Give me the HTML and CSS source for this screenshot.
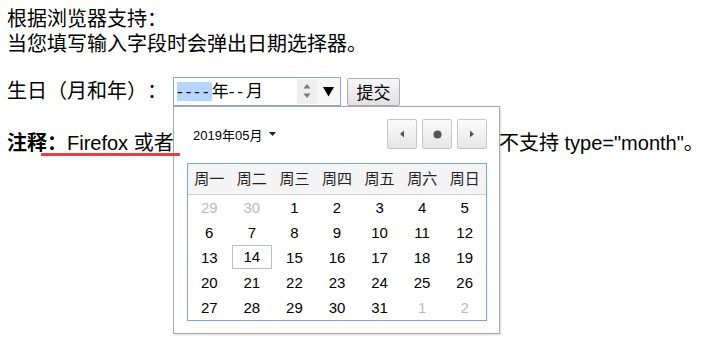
FILE: index.html
```html
<!DOCTYPE html>
<html lang="zh-CN">

<head>
    <meta charset="UTF-8" />
    <title>月份选择</title>
    <link rel="stylesheet" href="styles.css">
</head>

<body>
    <div class="page">

        <div class="intro">根据浏览器支持：<br>当您填写输入字段时会弹出日期选择器。</div>

        <form class="birth-form">
            <label class="field-label">生日（月和年）：</label>

            <div class="month-field">
                <div class="month-input">
                    <span class="seg seg-active">----</span><span class="unit">年</span><span class="seg">--</span><span class="unit">月</span>
                    <span class="spin">
                        <svg width="8" height="15" viewBox="0 0 8 15">
                            <path d="M4 0 L7.5 4.5 H0.5 Z" fill="#777" />
                            <path d="M4 14 L7.5 9.5 H0.5 Z" fill="#777" />
                        </svg>
                    </span>
                    <span class="drop">
                        <svg width="11" height="10" viewBox="0 0 11 10">
                            <path d="M0 0 H11 L5.5 9.5 Z" fill="#000" />
                        </svg>
                    </span>
                </div>

                <!-- 달력 팝업 -->
                <div class="picker">
                    <div class="picker-head">
                        <div class="month-label">2019年05月
                            <svg class="caret" width="7" height="4" viewBox="0 0 7 4">
                                <path d="M0 0 H7 L3.5 4 Z" fill="#222" />
                            </svg>
                        </div>
                        <div class="nav">
                            <div class="nav-btn">
                                <svg width="6" height="8" viewBox="0 0 6 8"><path d="M1 4 L5 0.5 V7.5 Z" fill="#555" /></svg>
                            </div>
                            <div class="nav-btn">
                                <svg width="9" height="9" viewBox="0 0 9 9"><circle cx="4.5" cy="4.5" r="4" fill="#555" /></svg>
                            </div>
                            <div class="nav-btn">
                                <svg width="6" height="8" viewBox="0 0 6 8"><path d="M5 4 L1 0.5 V7.5 Z" fill="#555" /></svg>
                            </div>
                        </div>
                    </div>

                    <div class="calendar">
                        <div class="week">
                            <span>周一</span><span>周二</span><span>周三</span><span>周四</span><span>周五</span><span>周六</span><span>周日</span>
                        </div>
                        <div class="days">
                            <span class="other">29</span><span class="other">30</span><span>1</span><span>2</span><span>3</span><span>4</span><span>5</span>
                            <span>6</span><span>7</span><span>8</span><span>9</span><span>10</span><span>11</span><span>12</span>
                            <span>13</span><span class="today">14</span><span>15</span><span>16</span><span>17</span><span>18</span><span>19</span>
                            <span>20</span><span>21</span><span>22</span><span>23</span><span>24</span><span>25</span><span>26</span>
                            <span>27</span><span>28</span><span>29</span><span>30</span><span>31</span><span class="other">1</span><span class="other">2</span>
                        </div>
                    </div>
                </div>
            </div>

            <button type="button" class="submit">提交</button>
        </form>

        <p class="note"><b>注释：</b>Firefox 或者 Internet Explorer 11 以及更早的版本不支持 type="month"。<span class="mark"></span></p>

    </div>
</body>

</html>
```

FILE: styles.css
```css
* {
    margin: 0;
    padding: 0;
    box-sizing: border-box;
}

html,
body {
    width: 100%;
    height: 100%;
    overflow: hidden;
    background-color: #fff;
}

body {
    font-family: "Liberation Sans", "Noto Sans CJK SC", sans-serif;
    font-size: 20px;
    color: #000;
    text-spacing-trim: space-all;
}

.page {
    padding: 7px 0 0 7px;
    white-space: nowrap;
}

.intro {
    line-height: 25px;
}

.birth-form {
    display: flex;
    align-items: center;
    margin-top: 20px;
}

.field-label {
    line-height: 25px;
}

.month-field {
    position: relative;
    margin-left: 6px;
}

/* 입력칸 */
.month-input {
    display: flex;
    align-items: center;
    width: 168px;
    height: 29px;
    padding-left: 3px;
    border: 1px solid #7ea8e6;
    font-size: 17px;
}

.seg {
    letter-spacing: 3px;
    line-height: 19px;
}

.seg-active {
    background-color: #b5d5fd;
}

.unit {
    line-height: 19px;
}

.spin {
    display: flex;
    align-items: center;
    justify-content: center;
    margin-left: auto;
    width: 20px;
    height: 25px;
    background-color: #eee;
}

.drop {
    display: flex;
    align-items: center;
    justify-content: center;
    width: 22px;
    height: 25px;
    margin-right: 1px;
    background-color: #f7f7f7;
}

.submit {
    margin-left: 6px;
    width: 53px;
    height: 28px;
    font-family: "Liberation Sans", "Noto Sans CJK SC", sans-serif;
    font-size: 17px;
    color: #000;
    border: 1px solid #adadad;
    border-radius: 2px;
    background: linear-gradient(#f6f6f6, #e2e2e2);
}

/* 달력 팝업 */
.picker {
    position: absolute;
    top: 100%;
    left: 0;
    z-index: 10;
    width: 327px;
    height: 228px;
    padding: 12px 12px 0 13px;
    background-color: #fff;
    border: 1px solid #a8a8a8;
    box-shadow: 1px 1px 2px rgba(0, 0, 0, 0.15);
}

.picker-head {
    display: flex;
    justify-content: space-between;
    align-items: center;
    height: 30px;
}

.month-label {
    display: flex;
    align-items: center;
    gap: 7px;
    margin-left: 6px;
    font-size: 13px;
}

.nav {
    display: flex;
    gap: 5px;
}

.nav-btn {
    display: flex;
    align-items: center;
    justify-content: center;
    width: 30px;
    height: 30px;
    border: 1px solid #c6c6c6;
    border-radius: 2px;
    background: linear-gradient(#fbfbfb, #e6e6e6);
}

.calendar {
    margin-top: 14px;
    width: 300px;
    border: 1px solid #77a3ea;
    font-size: 15px;
}

.week,
.days {
    display: grid;
    grid-template-columns: repeat(7, 1fr);
    text-align: center;
}

.week {
    height: 31px;
    line-height: 30px;
    background-color: #f4f4f4;
    border-bottom: 1px solid #cfcfcf;
    color: #222;
}

.days span {
    height: 25px;
    line-height: 25px;
}

.days .other {
    color: #bbb;
}

.days .today {
    margin: 0 1px;
    height: 24px;
    line-height: 22px;
    border: 1px solid #bdbdbd;
}

/* 주석 */
.note {
    position: relative;
    margin-top: 25px;
    line-height: 25px;
}

.mark {
    position: absolute;
    left: 34px;
    top: 22px;
    z-index: 20;
    width: 139px;
    height: 3px;
    background-color: #f43a3a;
}
```
